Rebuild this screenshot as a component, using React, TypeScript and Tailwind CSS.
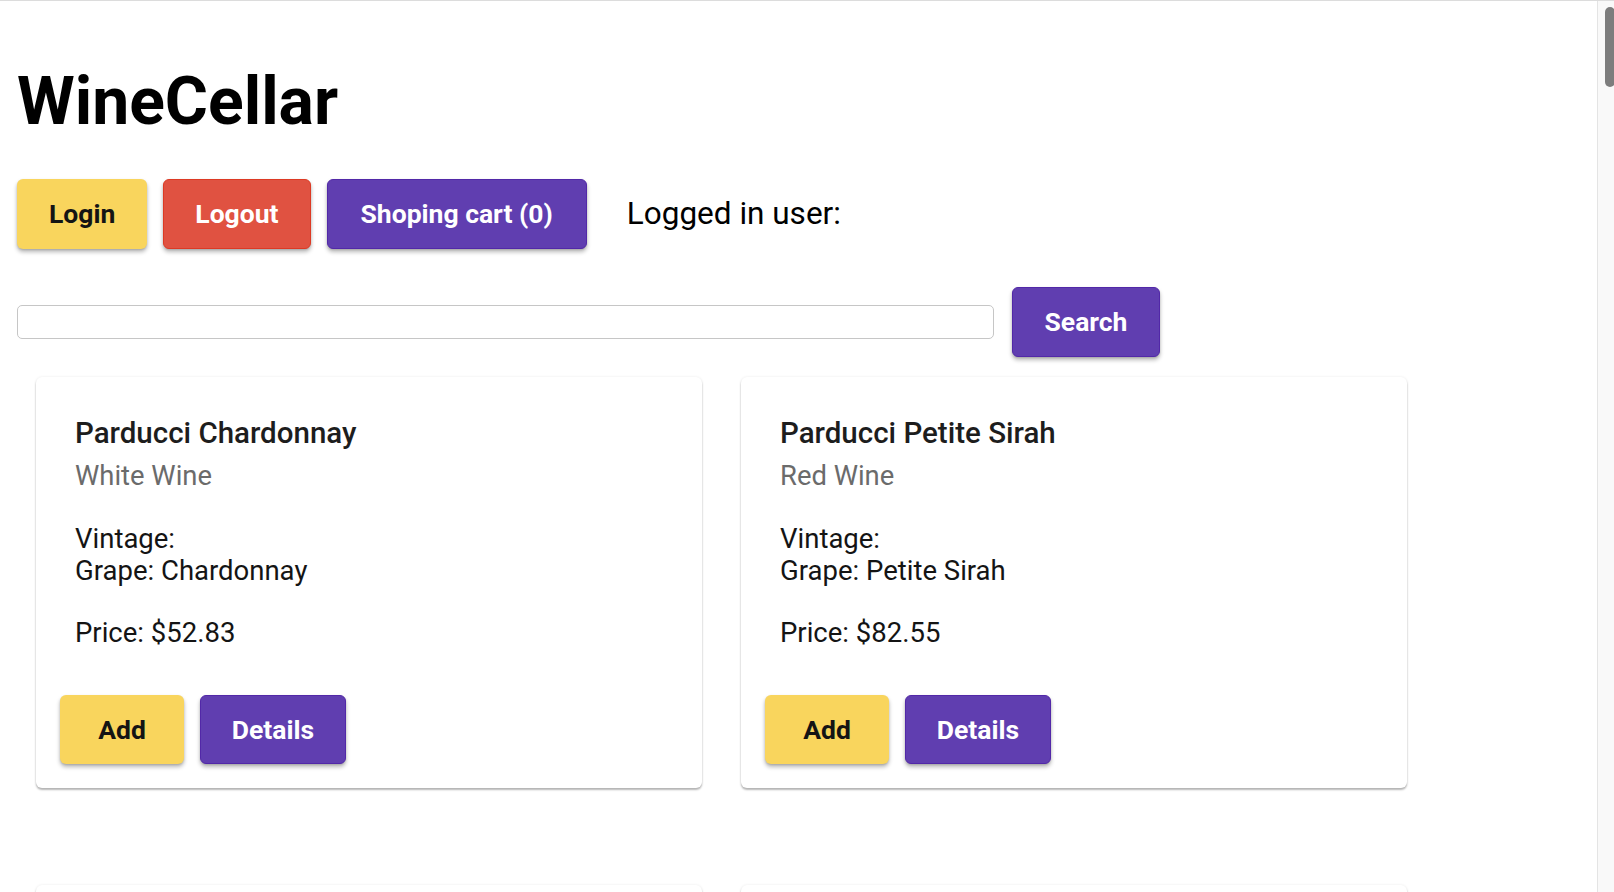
import React from "react";

type Wine = {
  name: string;
  type: string;
  grape: string;
  price: string;
};

const wines: Wine[] = [
  { name: "Parducci Chardonnay", type: "White Wine", grape: "Chardonnay", price: "$52.83" },
  { name: "Parducci Petite Sirah", type: "Red Wine", grape: "Petite Sirah", price: "$82.55" },
];

const btnShadow = "shadow-[0_3px_4px_0_rgba(0,0,0,0.28),0_1px_2px_0_rgba(0,0,0,0.12)]";
const cardShadow = "shadow-[0_2px_2px_0_rgba(0,0,0,0.28),0_0_3px_0_rgba(0,0,0,0.08)]";

function WineCard({ wine }: { wine: Wine }) {
  return (
    <div className={`bg-white rounded-[6px] pt-[39px] pb-[24px] ${cardShadow}`}>
      <div className="px-[39px]">
        <div className="text-[29.5px] font-medium leading-[34px] text-[#1d1d1d]">{wine.name}</div>
        <div className="mt-[9px] text-[27.4px] leading-[34px] text-[#6b6b6b]">{wine.type}</div>
        <div className="mt-[30px] text-[27.5px] leading-[32px] text-[#141414]">
          Vintage:
          <br />
          Grape: {wine.grape}
        </div>
        <div className="mt-[30px] text-[27.5px] leading-[32px] text-[#141414]">Price: {wine.price}</div>
      </div>
      <div className="mt-[46px] px-[24px] flex items-center gap-[16px]">
        <button
          className={`h-[69px] w-[124px] rounded-[6px] bg-[#f9d55d] text-[26.5px] font-bold text-[#141414] ${btnShadow}`}
        >
          Add
        </button>
        <button
          className={`h-[69px] w-[146px] rounded-[6px] bg-[#603eb0] border border-[#5228a8] text-[26.5px] font-bold text-white ${btnShadow}`}
        >
          Details
        </button>
      </div>
    </div>
  );
}

export default function App() {
  return (
    <div className="relative h-[892px] w-full overflow-hidden bg-white border-t border-[#dcdcdc] font-['Roboto',sans-serif] text-black">
      <div className="pl-[17px] pr-[17px]">
        <h1 className="mt-[60px] text-[66px] font-bold leading-[82px] text-black">WineCellar</h1>

        <div className="mt-[36px] flex items-center gap-[16px]">
          <button
            className={`h-[70px] px-[32px] rounded-[6px] bg-[#f9d55d] text-[26.5px] font-bold text-[#141414] ${btnShadow}`}
          >
            Login
          </button>
          <button
            className={`h-[70px] px-[31px] rounded-[6px] bg-[#e05241] border border-[#dd3a24] text-[26.5px] font-bold text-white ${btnShadow}`}
          >
            Logout
          </button>
          <button
            className={`h-[70px] px-[33px] rounded-[6px] bg-[#603eb0] border border-[#5228a8] text-[26.5px] font-bold text-white ${btnShadow}`}
          >
            Shoping cart (0)
          </button>
          <span className="ml-[24px] text-[31.5px] leading-[40px] text-black">Logged in user:</span>
        </div>

        <div className="mt-[38px] flex items-center gap-[18px]">
          <input
            type="text"
            className="h-[34px] w-[977px] rounded-[5px] border border-[#c6c6c6] bg-white px-2 outline-none"
          />
          <button
            className={`h-[70px] w-[148px] rounded-[6px] bg-[#603eb0] border border-[#5228a8] text-[26.5px] font-bold text-white ${btnShadow}`}
          >
            Search
          </button>
        </div>

        <div className="mt-[20px] ml-[19px] grid grid-cols-[666px_666px] gap-x-[39px] gap-y-[97px]">
          {wines.map((w) => (
            <WineCard key={w.name} wine={w} />
          ))}
          <div className={`h-[412px] bg-white rounded-[6px] ${cardShadow}`} />
          <div className={`h-[412px] bg-white rounded-[6px] ${cardShadow}`} />
        </div>
      </div>

      <div className="absolute right-0 top-0 h-full w-[17px] bg-[#f9f9f9] border-l border-[#e4e4e4]">
        <div className="absolute left-[7px] top-[6px] h-[80px] w-[10px] rounded-[5px] bg-[#7d7d7d]" />
      </div>
    </div>
  );
}
